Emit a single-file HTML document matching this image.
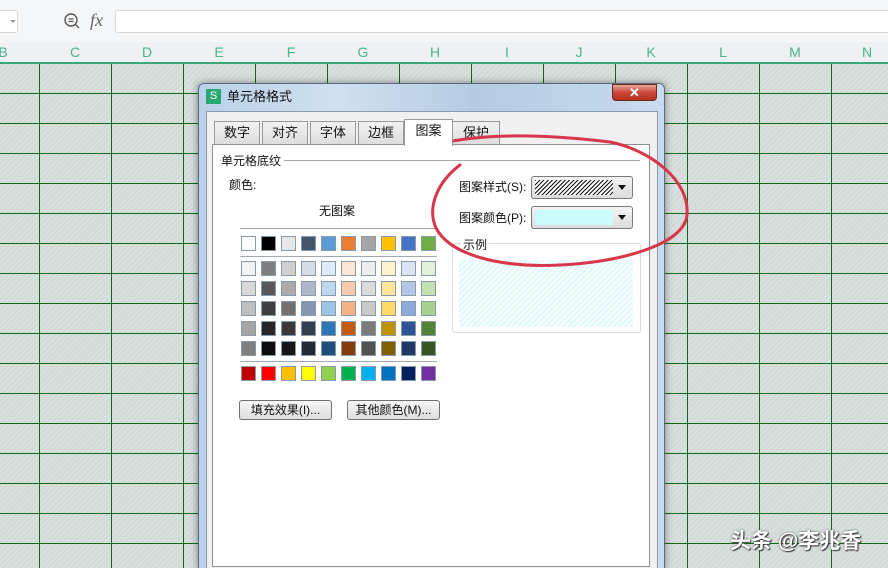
<!DOCTYPE html>
<html style="width:888px;height:568px;overflow:hidden"><head><meta charset="utf-8">
<style>
*{margin:0;padding:0;box-sizing:border-box}
body{width:888px;height:568px;overflow:hidden;position:relative;background:#fff;font-family:"Liberation Sans","Noto Sans CJK SC",sans-serif;font-size:12px;color:#111}
.abs{position:absolute}
#top{left:0;top:0;width:888px;height:42px;background:#f5f6f7}
#hdr{left:0;top:42px;width:888px;height:20px;background:#eef0f1}
#hdr span{position:absolute;top:0;width:72px;text-align:center;color:#4cb48a;font-size:14px;line-height:20px}
#grid{left:0;top:64px;width:888px;height:504px;
background-color:#d3dbd8;
background-image:repeating-linear-gradient(135deg,rgba(255,255,255,.22) 0 1px,transparent 1px 4px);}
.vl{position:absolute;top:64px;width:1px;height:504px;background:#0d6b17}
.hl{position:absolute;left:0;width:888px;height:1px;background:#0d6b17}
#dlg{left:198px;top:83px;width:467px;height:490px;border-radius:6px;border:1px solid #5a6c80;
background:linear-gradient(90deg,#b9d1e8,#cfe0ef 30%,#b3cbe2 60%,#c8dcee);box-shadow:0 0 8px rgba(0,0,0,.45)}
#panel{left:206px;top:111px;width:452px;height:462px;background:#f0f0f0;border:1px solid #8a9bb0}
.tab{position:absolute;top:121px;height:24px;background:linear-gradient(#f2f2f2,#dcdcdc);border:1px solid #999;border-bottom:none;text-align:center;line-height:22px;font-size:13px}
#tp{left:212px;top:144px;width:438px;height:423px;background:#fff;border:1px solid #8f8f8f}
.sw{position:absolute;width:15px;height:15px;border:1px solid #8a9aa8}
.sep{position:absolute;left:240px;width:197px;height:1px;background:#a0a8b0}
.btn{position:absolute;height:20px;border:1px solid #707070;border-radius:3px;background:linear-gradient(#f6f6f6,#dedede);text-align:center;line-height:18px;font-size:12px}
.dd{position:absolute;left:531px;width:102px;height:23px;border:1px solid #7a7a7a;border-radius:3px;background:linear-gradient(#f4f4f4,#dcdcdc)}
.dd i{position:absolute;right:6px;top:8px;border-left:4px solid transparent;border-right:4px solid transparent;border-top:5px solid #111}
</style></head><body>
<div id="top" class="abs"></div>
<div class="abs" style="left:-4px;top:10px;width:22px;height:23px;border:1px solid #d8d8d8;border-radius:3px;background:#fff"></div>
<div class="abs" style="left:10px;top:20px;border-left:3px solid transparent;border-right:3px solid transparent;border-top:3px solid #999"></div>
<svg class="abs" style="left:62px;top:11px" width="20" height="20"><circle cx="9" cy="9" r="6" fill="none" stroke="#555" stroke-width="1.4"/><path d="M13.5 13.5L17 17M6.5 8h5M6.5 10.5h5" stroke="#555" stroke-width="1.3"/></svg>
<div class="abs" style="left:90px;top:10px;font-family:'Liberation Serif',serif;font-style:italic;font-size:18px;color:#666">fx</div>
<div class="abs" style="left:115px;top:10px;width:780px;height:23px;border:1px solid #d8d8d8;border-radius:3px;background:#fff"></div>
<div id="hdr" class="abs">
<span style="left:-33px">B</span><span style="left:39px">C</span><span style="left:111px">D</span><span style="left:183px">E</span><span style="left:255px">F</span><span style="left:327px">G</span><span style="left:399px">H</span><span style="left:471px">I</span><span style="left:543px">J</span><span style="left:615px">K</span><span style="left:687px">L</span><span style="left:759px">M</span><span style="left:831px">N</span>
</div>
<div class="abs" style="left:0;top:62px;width:888px;height:3px;background:#3aa878"></div>
<div id="grid" class="abs"></div>
<div class="vl" style="left:39px"></div><div class="vl" style="left:111px"></div><div class="vl" style="left:183px"></div><div class="vl" style="left:255px"></div><div class="vl" style="left:327px"></div><div class="vl" style="left:399px"></div><div class="vl" style="left:471px"></div><div class="vl" style="left:543px"></div><div class="vl" style="left:615px"></div><div class="vl" style="left:687px"></div><div class="vl" style="left:759px"></div><div class="vl" style="left:831px"></div>
<div class="hl" style="top:93px"></div><div class="hl" style="top:123px"></div><div class="hl" style="top:153px"></div><div class="hl" style="top:183px"></div><div class="hl" style="top:213px"></div><div class="hl" style="top:243px"></div><div class="hl" style="top:273px"></div><div class="hl" style="top:303px"></div><div class="hl" style="top:333px"></div><div class="hl" style="top:363px"></div><div class="hl" style="top:393px"></div><div class="hl" style="top:423px"></div><div class="hl" style="top:453px"></div><div class="hl" style="top:483px"></div><div class="hl" style="top:513px"></div><div class="hl" style="top:543px"></div>

<div id="dlg" class="abs"></div>
<div class="abs" style="left:206px;top:89px;width:15px;height:15px;background:#2aa872;color:#fff;font-size:11px;line-height:15px;text-align:center">S</div>
<div class="abs" style="left:227px;top:88px;font-size:13px;line-height:18px">单元格格式</div>
<div class="abs" style="left:612px;top:84px;width:45px;height:17px;border:1px solid #6b2a20;border-radius:0 0 4px 4px;background:linear-gradient(#e9a89a,#c9463a 50%,#b8301f);color:#fff;font-weight:bold;text-align:center;line-height:15px;font-size:13px">✕</div>
<div id="panel" class="abs"></div>
<div class="tab" style="left:214px;width:46px">数字</div>
<div class="tab" style="left:262px;width:46px">对齐</div>
<div class="tab" style="left:310px;width:46px">字体</div>
<div class="tab" style="left:358px;width:46px">边框</div>
<div class="tab" style="left:452px;width:48px">保护</div>
<div id="tp" class="abs"></div>
<div class="tab" style="left:404px;top:119px;width:49px;height:27px;background:#fff;z-index:2">图案</div>

<div class="abs" style="left:221px;top:152px;font-size:12px;background:#fff;padding-right:3px;z-index:2">单元格底纹</div>
<div class="abs" style="left:220px;top:160px;width:420px;height:1px;background:#a8a8a8"></div>
<div class="abs" style="left:229px;top:176px">颜色:</div>
<div class="abs" style="left:319px;top:202px">无图案</div>
<div class="sep" style="top:228px"></div><div class="sep" style="top:256px"></div><div class="sep" style="top:361px"></div>
<div id="pal"></div>
<div class="btn" style="left:239px;top:400px;width:93px">填充效果(I)...</div>
<div class="btn" style="left:347px;top:400px;width:93px">其他颜色(M)...</div>

<div class="abs" style="left:459px;top:178px">图案样式(S):</div>
<div class="dd" style="top:176px"><div class="abs" style="left:3px;top:3px;width:78px;height:15px;background:repeating-linear-gradient(135deg,#111 0 1px,#fff 1px 3px)"></div><i></i></div>
<div class="abs" style="left:459px;top:209px">图案颜色(P):</div>
<div class="dd" style="top:206px"><div class="abs" style="left:3px;top:3px;width:78px;height:15px;background:#ccfbfb"></div><i></i></div>
<div class="abs" style="left:452px;top:243px;width:189px;height:90px;border:1px solid #dcdcdc;border-radius:3px"></div>
<div class="abs" style="left:461px;top:236px;background:#fff;padding:0 2px">示例</div>
<div class="abs" style="left:459px;top:260px;width:174px;height:67px;background-color:#f4fdfd;background-image:repeating-linear-gradient(135deg,#d6f4f4 0 1px,transparent 1px 4px)"></div>

<svg class="abs" style="left:0;top:0" width="888" height="568"><path d="M447 142 C500 132 560 136 610 142 C650 150 690 180 687 215 C684 245 620 262 560 265 C500 268 450 255 436 228 C426 205 440 180 460 165" fill="none" stroke="#d8364a" stroke-width="3" stroke-linecap="round"/></svg>
<div class="abs" style="left:730px;top:525px;font-size:21px;color:#fff;font-weight:bold;text-shadow:1px 1px 1px #333,0 0 2px #555">头条 @李兆香</div>
<script>
var c=[["#fff","#000","#e7e6e6","#44546a","#5b9bd5","#ed7d31","#a5a5a5","#ffc000","#4472c4","#70ad47"],
["#f2f2f2","#7f7f7f","#d0cece","#d6dce4","#deebf6","#fbe5d5","#ededed","#fff2cc","#dae3f3","#e2efd9"],
["#d8d8d8","#595959","#aeabab","#adb9ca","#bdd7ee","#f7cbac","#dbdbdb","#fee599","#b4c6e7","#c5e0b3"],
["#bfbfbf","#3f3f3f","#757070","#8496b0","#9dc3e6","#f4b183","#c9c9c9","#ffd965","#8eaadb","#a8d08d"],
["#a5a5a5","#262626","#3a3838","#323f4f","#2e75b5","#c55a11","#7b7b7b","#bf9000","#2f5496","#538135"],
["#7f7f7f","#0c0c0c","#171616","#222a35","#1e4e79","#833c0b","#525252","#7f6000","#1f3864","#375623"],
["#c00000","#f00","#ffc000","#ff0","#92d050","#00b050","#00b0f0","#0070c0","#002060","#7030a0"]];
var ys=[236,261,281,301,321,341,366],h="";
for(var r=0;r<7;r++)for(var i=0;i<10;i++)h+='<div class="sw" style="left:'+(241+i*20)+'px;top:'+ys[r]+'px;background:'+c[r][i]+'"></div>';
document.getElementById("pal").innerHTML=h;
</script>
</body></html>
